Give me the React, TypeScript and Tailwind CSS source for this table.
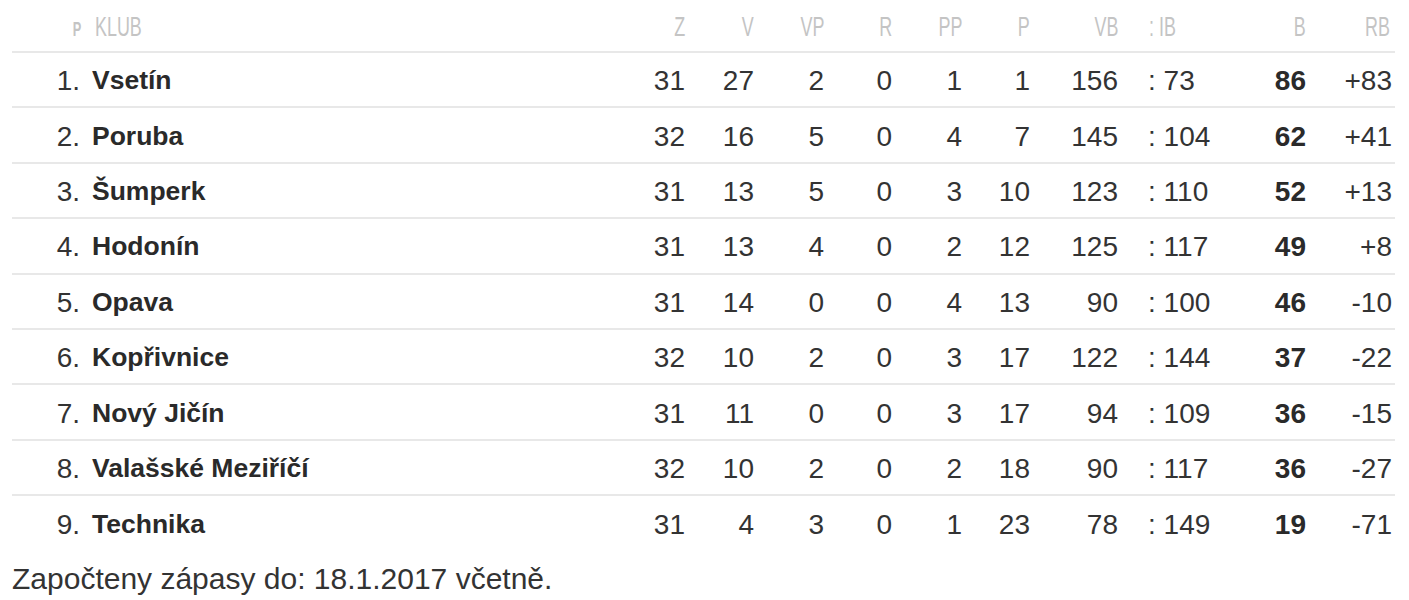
const rows = [
  { n: 1, club: "Vsetín", z: 31, v: 27, vp: 2, r: 0, pp: 1, p: 1, vb: 156, ib: 73, b: 86, rb: "+83" },
  { n: 2, club: "Poruba", z: 32, v: 16, vp: 5, r: 0, pp: 4, p: 7, vb: 145, ib: 104, b: 62, rb: "+41" },
  { n: 3, club: "Šumperk", z: 31, v: 13, vp: 5, r: 0, pp: 3, p: 10, vb: 123, ib: 110, b: 52, rb: "+13" },
  { n: 4, club: "Hodonín", z: 31, v: 13, vp: 4, r: 0, pp: 2, p: 12, vb: 125, ib: 117, b: 49, rb: "+8" },
  { n: 5, club: "Opava", z: 31, v: 14, vp: 0, r: 0, pp: 4, p: 13, vb: 90, ib: 100, b: 46, rb: "-10" },
  { n: 6, club: "Kopřivnice", z: 32, v: 10, vp: 2, r: 0, pp: 3, p: 17, vb: 122, ib: 144, b: 37, rb: "-22" },
  { n: 7, club: "Nový Jičín", z: 31, v: 11, vp: 0, r: 0, pp: 3, p: 17, vb: 94, ib: 109, b: 36, rb: "-15" },
  { n: 8, club: "Valašské Meziříčí", z: 32, v: 10, vp: 2, r: 0, pp: 2, p: 18, vb: 90, ib: 117, b: 36, rb: "-27" },
  { n: 9, club: "Technika", z: 31, v: 4, vp: 3, r: 0, pp: 1, p: 23, vb: 78, ib: 149, b: 19, rb: "-71" },
];

const cols = "grid grid-cols-[72px_536px_70px_69px_70px_68px_70px_68px_88px_117px_71px_84px]";

// condensed header label (no narrow font installed, so squeeze it)
function H({ children, left }: { children: React.ReactNode; left?: boolean }) {
  return (
    <span className={`inline-block scale-x-[0.64] ${left ? "origin-left" : "origin-right"}`}>{children}</span>
  );
}

export default function App() {
  return (
    <div className="bg-white w-[1409px] h-[600px] overflow-hidden font-['Liberation_Sans',Arial,sans-serif] text-[#333]">
      <div className="ml-[12px] w-[1383px]">
        <div className={`${cols} h-[53px] border-b-2 border-[#e8e8e8] items-center text-[#c4c4c4] text-[28px] pt-[3px]`}>
          <div className="text-right pr-[3px] text-[20px] font-bold pt-[3px]"><H>P</H></div>
          <div className="pl-[11px]"><H left>KLUB</H></div>
          <div className="text-right pr-[5px]"><H>Z</H></div>
          <div className="text-right pr-[5px]"><H>V</H></div>
          <div className="text-right pr-[5px]"><H>VP</H></div>
          <div className="text-right pr-[5px]"><H>R</H></div>
          <div className="text-right pr-[5px]"><H>PP</H></div>
          <div className="text-right pr-[5px]"><H>P</H></div>
          <div className="text-right pr-[5px]"><H>VB</H></div>
          <div className="pl-[26px]"><H left>: IB</H></div>
          <div className="text-right pr-[5px]"><H>B</H></div>
          <div className="text-right pr-[5px]"><H>RB</H></div>
        </div>
        {rows.map((row, i) => (
          <div
            key={row.n}
            className={`${cols} h-[55.4px] items-center text-[28px] pt-[3px] ${i < rows.length - 1 ? "border-b-2 border-[#e8e8e8]" : ""}`}
          >
            <div className="text-right pr-[4px]">{row.n}.</div>
            <div className="pl-[8px] font-bold text-[#2a2a2a] text-[26.5px]">{row.club}</div>
            <div className="text-right pr-[5px]">{row.z}</div>
            <div className="text-right pr-[5px]">{row.v}</div>
            <div className="text-right pr-[5px]">{row.vp}</div>
            <div className="text-right pr-[5px]">{row.r}</div>
            <div className="text-right pr-[5px]">{row.pp}</div>
            <div className="text-right pr-[5px]">{row.p}</div>
            <div className="text-right pr-[5px]">{row.vb}</div>
            <div className="pl-[25px]">: {row.ib}</div>
            <div className="text-right pr-[5px] font-bold text-[#2a2a2a]">{row.b}</div>
            <div className="text-right pr-[3px]">{row.rb}</div>
          </div>
        ))}
        <p className="mt-[4px] text-[30px] text-[#333]">Započteny zápasy do: 18.1.2017 včetně.</p>
      </div>
    </div>
  );
}
